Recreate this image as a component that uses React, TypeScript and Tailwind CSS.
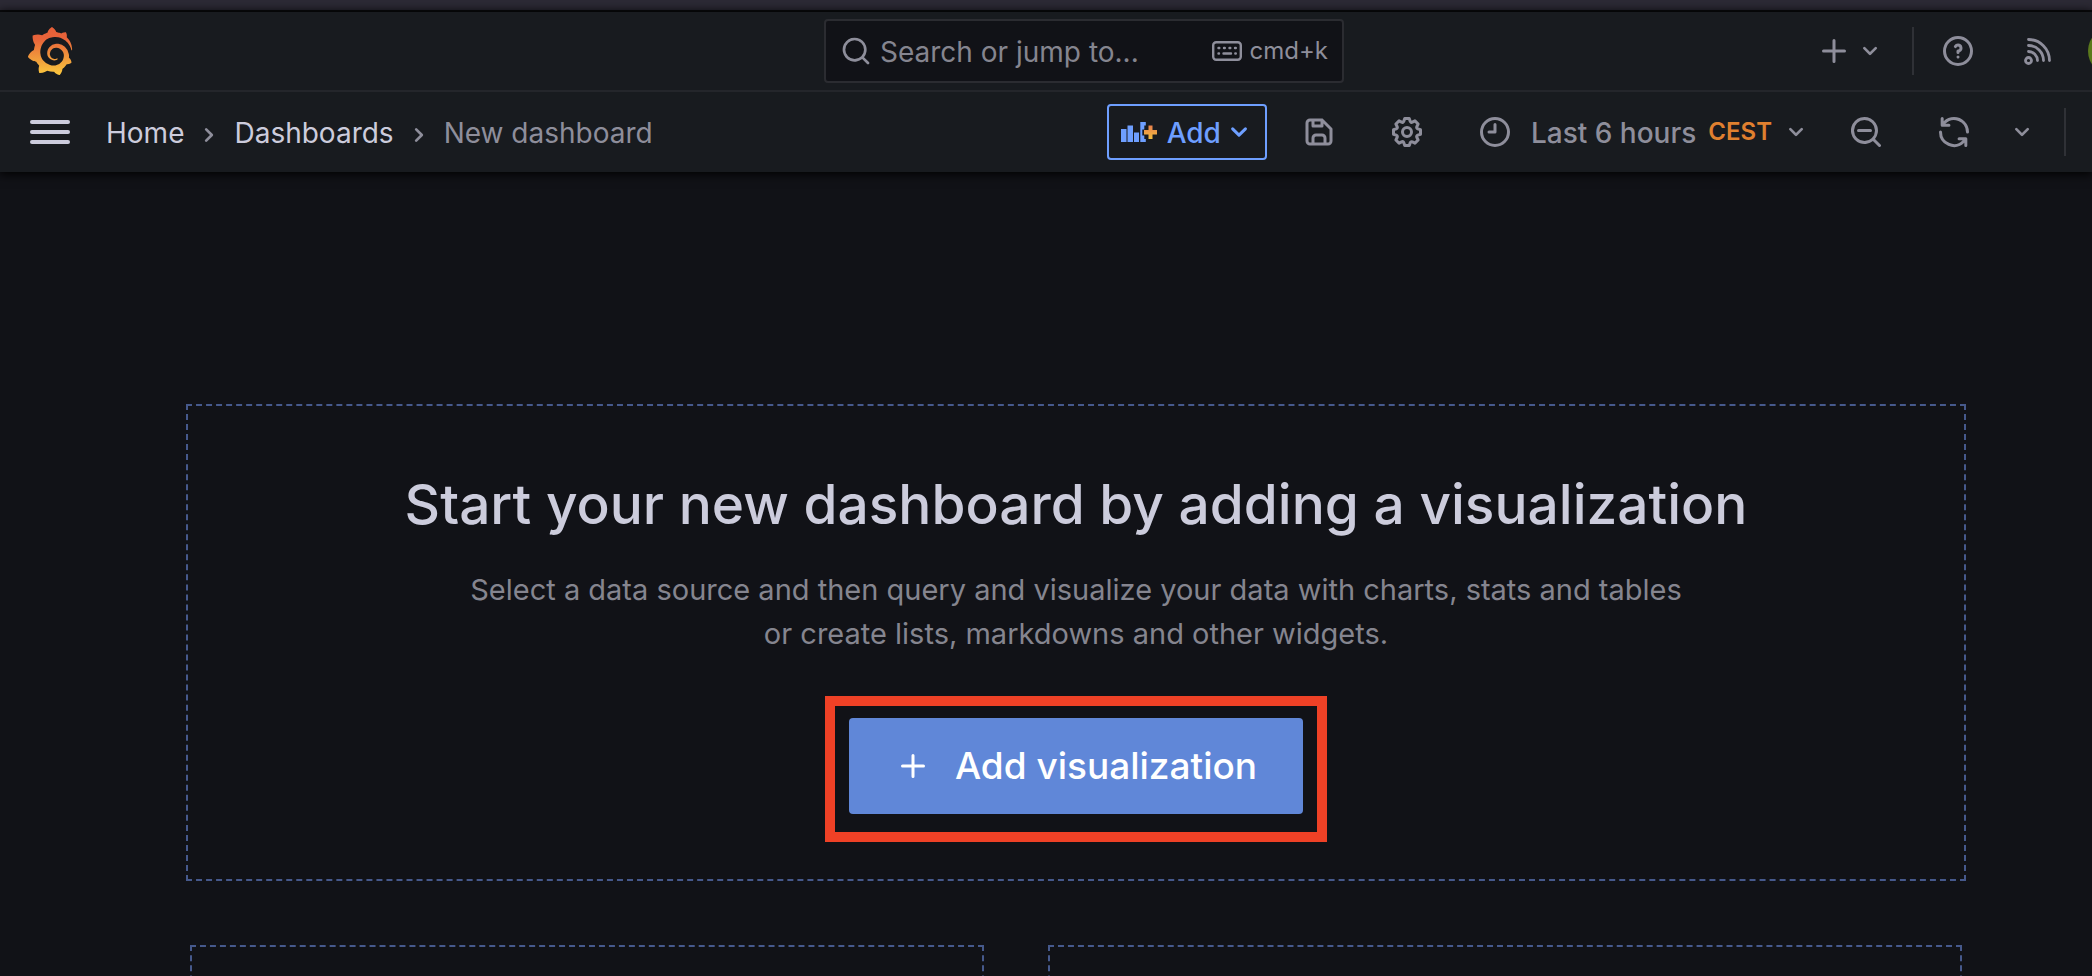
import type { ReactNode } from 'react';
import { SiGrafana } from 'react-icons/si';

const paths = {
  search:
    'M21.71,20.29,18,16.61A9,9,0,1,0,16.61,18l3.68,3.68a1,1,0,0,0,1.42,0A1,1,0,0,0,21.71,20.29ZM11,18a7,7,0,1,1,7-7A7,7,0,0,1,11,18Z',
  searchMinus:
    'M21.71,20.29,18,16.61A9,9,0,1,0,16.61,18l3.68,3.68a1,1,0,0,0,1.42,0A1,1,0,0,0,21.71,20.29ZM11,18a7,7,0,1,1,7-7A7,7,0,0,1,11,18Zm4-8H7a1,1,0,0,0,0,2h8a1,1,0,0,0,0-2Z',
  angleDown:
    'M17,9.17a1,1,0,0,0-1.41,0L12,12.71,8.46,9.17a1,1,0,0,0-1.41,0,1,1,0,0,0,0,1.42l4.24,4.24a1,1,0,0,0,1.42,0L17,10.59A1,1,0,0,0,17,9.17Z',
  angleRight:
    'M14.83,11.29,10.59,7.05a1,1,0,0,0-1.42,0,1,1,0,0,0,0,1.41L12.71,12,9.17,15.54a1,1,0,0,0,0,1.41,1,1,0,0,0,.71.29,1,1,0,0,0,.71-.29l4.24-4.24A1,1,0,0,0,14.83,11.29Z',
  plus: 'M19,11H13V5a1,1,0,0,0-2,0v6H5a1,1,0,0,0,0,2h6v6a1,1,0,0,0,2,0V13h6a1,1,0,0,0,0-2Z',
  question:
    'M11.29,15.29a1.58,1.58,0,0,0-.12.15.76.76,0,0,0-.09.18.64.64,0,0,0-.06.18,1.36,1.36,0,0,0,0,.2.84.84,0,0,0,.08.38.9.9,0,0,0,.54.54.94.94,0,0,0,.76,0,.9.9,0,0,0,.54-.54A1,1,0,0,0,13,16a1,1,0,0,0-.29-.71A1,1,0,0,0,11.29,15.29ZM12,2A10,10,0,1,0,22,12,10,10,0,0,0,12,2Zm0,18a8,8,0,1,1,8-8A8,8,0,0,1,12,20ZM12,7A3,3,0,0,0,9.4,8.5a1,1,0,1,0,1.73,1A1,1,0,0,1,12,9a1,1,0,0,1,0,2,1,1,0,0,0-1,1v1a1,1,0,0,0,2,0v-.18A3,3,0,0,0,12,7Z',
  save: 'M20.71,9.29l-6-6a1,1,0,0,0-.32-.21A1.09,1.09,0,0,0,14,3H6A3,3,0,0,0,3,6V18a3,3,0,0,0,3,3H18a3,3,0,0,0,3-3V10A1,1,0,0,0,20.71,9.29ZM9,5h4V7H9Zm6,14H9V16a1,1,0,0,1,1-1h4a1,1,0,0,1,1,1Zm4-1a1,1,0,0,1-1,1H17V16a3,3,0,0,0-3-3H10a3,3,0,0,0-3,3v3H6a1,1,0,0,1-1-1V6A1,1,0,0,1,6,5H7V8A1,1,0,0,0,8,9h6a1,1,0,0,0,1-1V6.41l4,4Z',
  clock:
    'M12,2A10,10,0,1,0,22,12,10,10,0,0,0,12,2Zm0,18a8,8,0,1,1,8-8A8,8,0,0,1,12,20ZM12,6a1,1,0,0,0-1,1v4H8a1,1,0,0,0,0,2h4a1,1,0,0,0,1-1V7A1,1,0,0,0,12,6Z',
  sync: 'M19.91,15.51H15.38a1,1,0,0,0,0,2h2.4A8,8,0,0,1,4,12a1,1,0,1,0-2,0,10,10,0,0,0,16.88,7.23V21a1,1,0,0,0,2,0V16.5A1,1,0,0,0,19.91,15.51ZM12,2A10,10,0,0,0,5.12,4.77V3a1,1,0,0,0-2,0V7.5a1,1,0,0,0,1,1h4.5a1,1,0,0,0,0-2H6.22A8,8,0,0,1,20,12a1,1,0,0,0,2,0A10,10,0,0,0,12,2Z',
  cog: 'M21.32,9.55l-1.89-.63.89-1.78A1,1,0,0,0,20.13,6L18,3.87a1,1,0,0,0-1.15-.19l-1.78.89-.63-1.89A1,1,0,0,0,13.5,2h-3a1,1,0,0,0-.95.68L8.92,4.57,7.14,3.68A1,1,0,0,0,6,3.87L3.87,6a1,1,0,0,0-.19,1.15l.89,1.78-1.89.63A1,1,0,0,0,2,10.5v3a1,1,0,0,0,.68.95l1.89.63-.89,1.78A1,1,0,0,0,3.87,18L6,20.13a1,1,0,0,0,1.15.19l1.78-.89.63,1.89a1,1,0,0,0,.95.68h3a1,1,0,0,0,.95-.68l.63-1.89,1.78.89A1,1,0,0,0,18,20.13L20.13,18a1,1,0,0,0,.19-1.15l-.89-1.78,1.89-.63A1,1,0,0,0,22,13.5v-3A1,1,0,0,0,21.32,9.55ZM20,12.78l-1.2.4A2,2,0,0,0,17.64,16l.57,1.14-1.1,1.1L16,17.64a2,2,0,0,0-2.79,1.16l-.4,1.2H11.22l-.4-1.2A2,2,0,0,0,8,17.64l-1.14.57-1.1-1.1L6.36,16A2,2,0,0,0,5.2,13.18L4,12.78V11.22l1.2-.4A2,2,0,0,0,6.36,8L5.79,6.89l1.1-1.1L8,6.36A2,2,0,0,0,10.82,5.2l.4-1.2h1.56l.4,1.2A2,2,0,0,0,16,6.36l1.14-.57,1.1,1.1L17.64,8a2,2,0,0,0,1.16,2.79l1.2.4ZM12,8a4,4,0,1,0,4,4A4,4,0,0,0,12,8Zm0,6a2,2,0,1,1,2-2A2,2,0,0,1,12,14Z',
};

function Icon({ name, className = 'size-9' }: { name: keyof typeof paths; className?: string }) {
  return (
    <svg viewBox="0 0 24 24" fill="currentColor" className={`shrink-0 ${className}`} aria-hidden="true">
      <path d={paths[name]} />
    </svg>
  );
}

function IconButton({ label, children, className = 'w-9' }: { label: string; children: ReactNode; className?: string }) {
  return (
    <button type="button" aria-label={label} className={`flex h-14 shrink-0 items-center justify-center ${className}`}>
      {children}
    </button>
  );
}

function Logo() {
  return (
    <a href="#home" aria-label="Grafana" className="flex">
      <svg className="size-0" aria-hidden="true">
        <defs>
          <linearGradient id="flame" x1="0" y1="1" x2="0" y2="0">
            <stop offset="0" stopColor="#fcc93e" />
            <stop offset="0.3" stopColor="#f1a03c" />
            <stop offset="0.75" stopColor="#e8643a" />
            <stop offset="1" stopColor="#e55f38" />
          </linearGradient>
        </defs>
      </svg>
      <SiGrafana className="size-12 fill-[url(#flame)]" />
    </a>
  );
}

function Keyboard() {
  return (
    <svg viewBox="0 0 30 20" className="h-5 w-[30px]" fill="none" stroke="currentColor" strokeWidth="2.4" aria-hidden="true">
      <rect x="1.2" y="1.2" width="27.6" height="17.6" rx="3" />
      <path strokeLinecap="round" d="M6.500 7h.8M12 7h.8M17.500 7h.8M23 7h.8M6.500 12.500h.5M11.500 12.500h7.500M23.300 12.500h.5" />
    </svg>
  );
}

function Rss() {
  return (
    <svg viewBox="0 0 28 28" className="size-7" fill="none" stroke="currentColor" strokeWidth="2.8" strokeLinecap="round" aria-hidden="true">
      <circle cx="4.500" cy="23.500" r="3" />
      <path d="M4.500 14.500a9 9 0 0 1 9 9M4.500 8.500a15 15 0 0 1 15 15M4.500 2.500a21 21 0 0 1 21 21" />
    </svg>
  );
}

function PanelAdd() {
  return (
    <svg viewBox="0 0 36 20" className="h-5 w-9" aria-hidden="true">
      <defs>
        <linearGradient id="cross" x1="0" y1="0" x2="0" y2="1">
          <stop offset="0" stopColor="#e8804d" />
          <stop offset="1" stopColor="#f2bd3c" />
        </linearGradient>
      </defs>
      <path fill="#6e9fff" d="M0 7h5.500v13H0zM6.500 3.500h5.500V20H6.500zM13 10.500h5V20h-5zM19.300 0h5.500v3.500h-1.500v4h-2v6h2v3.500h1.500v3h-5.500z" />
      <path fill="url(#cross)" d="M27.500 3.500h4v4.500h4.500v4.500h-4.500v4.500h-4V12.500H23V8h4.500z" />
    </svg>
  );
}

export default function App() {
  return (
    <div className="flex h-screen flex-col overflow-hidden bg-[#111217] font-['Inter',sans-serif] text-[#ccccdc]">
      <div className="h-3 shrink-0 border-b-2 border-[#0b0c0e] bg-[#2c2a35]" />
      <header className="z-10 shrink-0 bg-[#181b1f] text-[#8e8e9b] shadow-[0_1px_10px_1px_#000000]">
        <div className="-mr-[76px] grid h-20 grid-cols-[1fr_520px_1fr] items-center border-b-2 border-[#24262b]">
          <div className="pl-[26px]">
            <Logo />
          </div>
          <label className="flex h-16 items-center rounded-sm border-2 border-[#2b2c31] bg-[#111217] px-[14px]">
            <Icon name="search" className="size-8" />
            <input
              type="text"
              aria-label="Search or jump to"
              placeholder="Search or jump to..."
              className="ml-2 min-w-0 flex-1 bg-transparent pt-0.5 text-[28px] outline-none placeholder:text-[#85858f]"
            />
            <Keyboard />
            <span className="ml-2 text-2xl">cmd+k</span>
          </label>
          <div className="mr-8 flex items-center justify-end">
            <IconButton label="New" className="w-[66px] gap-0.5">
              <Icon name="plus" />
              <Icon name="angleDown" className="size-8" />
            </IconButton>
            <span className="mr-[26px] ml-7 h-12 w-0.5 bg-[#2f3136]" />
            <IconButton label="Help">
              <Icon name="question" />
            </IconButton>
            <IconButton label="News" className="ml-11 w-9">
              <Rss />
            </IconButton>
            <button type="button" aria-label="Profile" className="ml-8 size-12 rounded-full bg-[#5b7a1c]" />
          </div>
        </div>
        <div className="flex h-20 items-center pl-[30px]">
          <button type="button" aria-label="Toggle menu" className="flex w-10 flex-col gap-1.5">
            <span className="h-1 rounded-full bg-[#ccccdc]" />
            <span className="h-1 rounded-full bg-[#ccccdc]" />
            <span className="h-1 rounded-full bg-[#ccccdc]" />
          </button>
          <nav aria-label="Breadcrumbs" className="ml-9 flex items-center gap-[9px] pt-0.5 text-[28px]">
            <a href="#home" className="text-[#ccccdc]">Home</a>
            <Icon name="angleRight" className="mt-1 size-8" />
            <a href="#dashboards" className="text-[#ccccdc]">Dashboards</a>
            <Icon name="angleRight" className="mt-1 size-8" />
            <span>New dashboard</span>
          </nav>
          <div className="ml-auto flex items-center">
            <button type="button" className="flex h-14 items-center rounded-sm border-2 border-[#6e9fff] pr-2 pl-3 text-[28px] font-medium text-[#6e9fff]">
              <PanelAdd />
              <span className="ml-[10px] pt-0.5">Add</span>
              <Icon name="angleDown" className="size-9" />
            </button>
            <IconButton label="Save dashboard" className="ml-[34px] w-9">
              <Icon name="save" />
            </IconButton>
            <IconButton label="Dashboard settings" className="ml-13 w-9">
              <Icon name="cog" />
            </IconButton>
            <button type="button" className="ml-13 flex h-14 items-center text-[28px] font-medium">
              <Icon name="clock" />
              <span className="ml-[18px] pt-0.5">Last 6 hours</span>
              <span className="ml-3 text-2xl font-semibold text-[#e0802f]">CEST</span>
              <Icon name="angleDown" className="ml-2 size-8" />
            </button>
            <IconButton label="Zoom out" className="ml-9 w-9">
              <Icon name="searchMinus" />
            </IconButton>
            <IconButton label="Refresh" className="ml-13 w-9">
              <Icon name="sync" />
            </IconButton>
            <IconButton label="Refresh interval" className="ml-8 w-9">
              <Icon name="angleDown" className="size-8" />
            </IconButton>
            <span className="mr-[26px] ml-6 h-12 w-0.5 bg-[#2f3136]" />
          </div>
        </div>
      </header>
      <main className="flex flex-1 flex-col pt-[232px] pr-[126px] pl-[186px]">
        <section className="flex h-[477px] shrink-0 flex-col items-center border-2 border-dashed border-[#46598c] pt-16 text-center">
          <h1 className="text-[55px] leading-[68px] font-medium">Start your new dashboard by adding a visualization</h1>
          <p className="mt-[30px] text-[29px] leading-11 text-[#85858f]">
            Select a data source and then query and visualize your data with charts, stats and tables
            <br />
            or create lists, markdowns and other widgets.
          </p>
          <div className="mt-10 border-10 border-[#ef4126] px-[14px] pt-3 pb-[18px]">
            <button type="button" className="flex h-24 items-center rounded-sm bg-[#6087d8] px-[46px] text-[37px] font-medium text-white">
              <Icon name="plus" />
              <span className="ml-6">Add visualization</span>
            </button>
          </div>
        </section>
        <div className="mt-16 flex h-10 shrink-0 gap-16 px-1">
          <section className="h-80 flex-[794] border-2 border-dashed border-[#46598c]" />
          <section className="h-80 flex-[914] border-2 border-dashed border-[#46598c]" />
        </div>
      </main>
    </div>
  );
}
